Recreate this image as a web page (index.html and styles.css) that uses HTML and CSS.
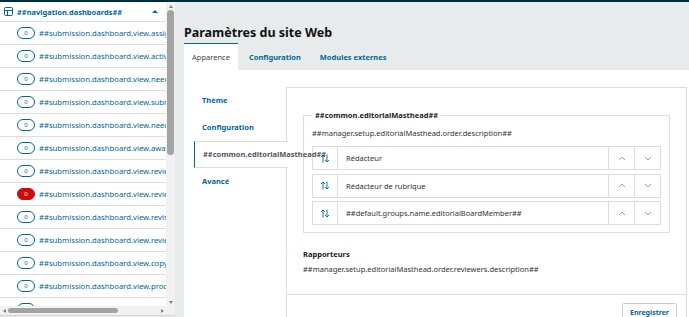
FILE: index.html
```html
<!DOCTYPE html>
<html lang="fr">
<head>
    <meta charset="UTF-8">
    <meta name="viewport" content="width=device-width, initial-scale=1.0">
    <title>Paramètres du site Web</title>
    <link rel="stylesheet" href="styles.css">
</head>
<body>

<div class="topbar"></div>

<div class="app">
    <nav class="sidebar">
        <div class="side-main">
            <div class="side-view">
                <div class="side-head">
                    <svg class="head-icon" viewBox="0 0 9 9" width="9" height="9">
                        <rect x="0.5" y="0.5" width="8" height="8" rx="1" fill="none" stroke="#006798"/>
                        <path d="M0.5 3.5H8.5M3.5 3.5V8.5" stroke="#006798"/>
                    </svg>
                    <span class="head-title">##navigation.dashboards##</span>
                    <span class="head-caret"></span>
                </div>
                <ul class="side-list">
                    <li><span class="badge">0</span>##submission.dashboard.view.assignedToMe##</li>
                    <li><span class="badge">0</span>##submission.dashboard.view.active##</li>
                    <li><span class="badge">0</span>##submission.dashboard.view.needsEditor##</li>
                    <li><span class="badge">0</span>##submission.dashboard.view.submission##</li>
                    <li><span class="badge">0</span>##submission.dashboard.view.needsReviewers##</li>
                    <li><span class="badge">0</span>##submission.dashboard.view.awaitingReviewers##</li>
                    <li><span class="badge">0</span>##submission.dashboard.view.reviewsComplete##</li>
                    <li><span class="badge badge-alert">0</span>##submission.dashboard.view.reviewsOverdue##</li>
                    <li><span class="badge">0</span>##submission.dashboard.view.revisionsRequested##</li>
                    <li><span class="badge">0</span>##submission.dashboard.view.reviewsSubmitted##</li>
                    <li><span class="badge">0</span>##submission.dashboard.view.copyediting##</li>
                    <li><span class="badge">0</span>##submission.dashboard.view.production##</li>
                    <li><span class="badge">0</span>##submission.dashboard.view.scheduledForPublication##</li>
                </ul>
            </div>
            <div class="vscroll">
                <span class="arrow arrow-up"></span>
                <div class="vtrack"><div class="vthumb"></div></div>
                <span class="arrow arrow-down"></span>
            </div>
        </div>
        <div class="hscroll">
            <span class="arrow arrow-left"></span>
            <div class="htrack"><div class="hthumb"></div></div>
            <span class="arrow arrow-right"></span>
            <span class="corner"></span>
        </div>
    </nav>

    <main class="main">
        <h1 class="page-title">Paramètres du site Web</h1>

        <div class="tabs">
            <div class="tab tab-active">Apparence</div>
            <div class="tab">Configuration</div>
            <div class="tab">Modules externes</div>
        </div>

        <div class="panel">
            <div class="vtabs">
                <div class="vtab">Thème</div>
                <div class="vtab">Configuration</div>
                <div class="vtab vtab-active">##common.editorialMasthead##</div>
                <div class="vtab">Avancé</div>
            </div>

            <div class="vcontent">
                <div class="form-body">
                    <fieldset class="group">
                        <legend>##common.editorialMasthead##</legend>
                        <p class="desc">##manager.setup.editorialMasthead.order.description##</p>
                        <div class="order-list">
                            <div class="order-row">
                                <div class="cell cell-drag">
                                    <svg viewBox="0 0 10 9" width="10" height="9"><path d="M3 8.5V1M1 3L3 1L5 3M7 0.5V8M5 6L7 8L9 6" fill="none" stroke="#006798" stroke-width="0.9"/></svg>
                                </div>
                                <div class="cell cell-label">Rédacteur</div>
                                <div class="cell cell-btn"><svg viewBox="0 0 8 5" width="8" height="5"><path d="M1 4L4 1L7 4" fill="none" stroke="#999" stroke-width="0.9"/></svg></div>
                                <div class="cell cell-btn"><svg viewBox="0 0 8 5" width="8" height="5"><path d="M1 1L4 4L7 1" fill="none" stroke="#999" stroke-width="0.9"/></svg></div>
                            </div>
                            <div class="order-row">
                                <div class="cell cell-drag">
                                    <svg viewBox="0 0 10 9" width="10" height="9"><path d="M3 8.5V1M1 3L3 1L5 3M7 0.5V8M5 6L7 8L9 6" fill="none" stroke="#006798" stroke-width="0.9"/></svg>
                                </div>
                                <div class="cell cell-label">Rédacteur de rubrique</div>
                                <div class="cell cell-btn"><svg viewBox="0 0 8 5" width="8" height="5"><path d="M1 4L4 1L7 4" fill="none" stroke="#999" stroke-width="0.9"/></svg></div>
                                <div class="cell cell-btn"><svg viewBox="0 0 8 5" width="8" height="5"><path d="M1 1L4 4L7 1" fill="none" stroke="#999" stroke-width="0.9"/></svg></div>
                            </div>
                            <div class="order-row">
                                <div class="cell cell-drag">
                                    <svg viewBox="0 0 10 9" width="10" height="9"><path d="M3 8.5V1M1 3L3 1L5 3M7 0.5V8M5 6L7 8L9 6" fill="none" stroke="#006798" stroke-width="0.9"/></svg>
                                </div>
                                <div class="cell cell-label">##default.groups.name.editorialBoardMember##</div>
                                <div class="cell cell-btn"><svg viewBox="0 0 8 5" width="8" height="5"><path d="M1 4L4 1L7 4" fill="none" stroke="#999" stroke-width="0.9"/></svg></div>
                                <div class="cell cell-btn"><svg viewBox="0 0 8 5" width="8" height="5"><path d="M1 1L4 4L7 1" fill="none" stroke="#999" stroke-width="0.9"/></svg></div>
                            </div>
                        </div>
                    </fieldset>

                    <div class="section">
                        <div class="section-title">Rapporteurs</div>
                        <p class="desc">##manager.setup.editorialMasthead.order.reviewers.description##</p>
                    </div>
                </div>

                <div class="form-footer">
                    <button class="btn-save">Enregistrer</button>
                </div>
            </div>
        </div>
    </main>
</div>

</body>
</html>
```

FILE: styles.css
```css
body {
    margin: 0;
    padding: 0;
    overflow: hidden;
    font-family: "Noto Sans", Arial, sans-serif;
    font-size: 7.5px;
    color: #222222;
    background: #e8ebec;
    height: 317px;
}
.topbar {
    height: 2px;
    background: #002c40;
}
.app {
    display: flex;
    height: 315px;
}

/* left navigation */
.sidebar {
    width: 175px;
    height: 313px;
    flex-shrink: 0;
    display: flex;
    flex-direction: column;
    background: #ffffff;
    border-bottom: 1px solid #d4d4d4;
}
.side-main {
    display: flex;
    height: 304px;
}
.side-view {
    width: 166px;
    overflow: hidden;
}
.side-head {
    display: flex;
    align-items: center;
    height: 19px;
    padding-left: 4px;
    border-bottom: 1px solid #dddddd;
    color: #006798;
    font-weight: bold;
}
.head-icon {
    margin-right: 4px;
}
.head-title {
    flex: 1;
}
.head-caret {
    width: 0;
    height: 0;
    border-left: 3px solid transparent;
    border-right: 3px solid transparent;
    border-bottom: 3px solid #006798;
    margin-right: 8px;
}
.side-list {
    list-style: none;
    margin: 0;
    padding: 0;
}
.side-list li {
    display: flex;
    align-items: center;
    height: 22px;
    border-bottom: 1px solid #dddddd;
    padding-left: 17px;
    color: #006798;
    white-space: nowrap;
    font-size: 7.7px;
}
.badge {
    display: inline-flex;
    justify-content: center;
    align-items: center;
    width: 16px;
    height: 10px;
    border: 1px solid #006798;
    border-radius: 6px;
    font-size: 6px;
    margin-right: 4px;
    flex-shrink: 0;
}
.badge-alert {
    background: #d00a0a;
    border-color: #d00a0a;
    color: #ffffff;
}

/* fake scrollbars of the navigation */
.vscroll {
    width: 9px;
    display: flex;
    flex-direction: column;
    background: #f1f1f1;
}
.vtrack {
    flex: 1;
    padding: 0 1px;
}
.vthumb {
    height: 145px;
    background: #a3a3a3;
    border-radius: 4px;
}
.hscroll {
    display: flex;
    height: 9px;
    background: #f1f1f1;
}
.htrack {
    flex: 1;
    padding: 2px 0;
    box-sizing: border-box;
}
.hthumb {
    width: 110px;
    height: 5px;
    background: #a3a3a3;
    border-radius: 3px;
}
.arrow {
    display: flex;
    justify-content: center;
    align-items: center;
    width: 9px;
    height: 8px;
    flex-shrink: 0;
}
.arrow::before {
    content: "";
    width: 0;
    height: 0;
}
.arrow-up::before {
    border-left: 2.5px solid transparent;
    border-right: 2.5px solid transparent;
    border-bottom: 3px solid #808080;
}
.arrow-down::before {
    border-left: 2.5px solid transparent;
    border-right: 2.5px solid transparent;
    border-top: 3px solid #808080;
}
.arrow-left,
.arrow-right {
    width: 8px;
    height: 9px;
}
.arrow-left::before {
    border-top: 2.5px solid transparent;
    border-bottom: 2.5px solid transparent;
    border-right: 3px solid #808080;
}
.arrow-right::before {
    border-top: 2.5px solid transparent;
    border-bottom: 2.5px solid transparent;
    border-left: 3px solid #808080;
}
.corner {
    width: 9px;
    flex-shrink: 0;
    background: #f1f1f1;
}

/* main area */
.main {
    flex: 1;
    padding-left: 9px;
    min-width: 0;
}
.page-title {
    margin: 0;
    padding-top: 21px;
    height: 20px;
    font-size: 12.5px;
    font-weight: bold;
    line-height: 20px;
    color: #111111;
}
.tabs {
    display: flex;
    gap: 3px;
}
.tab {
    height: 26px;
    line-height: 26px;
    padding: 0 8px;
    color: #006798;
    font-weight: bold;
    border-top: 1px solid transparent;
}
.tab-active {
    background: #ffffff;
    border-top-color: #006798;
    color: #444444;
    font-weight: normal;
}
.panel {
    display: flex;
    align-items: flex-start;
    background: #ffffff;
    height: 250px;
    padding: 17px 2px 0 10px;
    box-sizing: border-box;
}
.vtabs {
    width: 92px;
    flex-shrink: 0;
    position: relative;
    z-index: 1;
}
.vtab {
    height: 27px;
    line-height: 27px;
    padding-left: 8px;
    color: #006798;
    font-weight: bold;
    white-space: nowrap;
}
.vtab-active {
    height: 25px;
    line-height: 25px;
    margin-right: -2px;
    padding-left: 8px;
    background: #ffffff;
    border-top: 1px solid #dddddd;
    border-bottom: 1px solid #dddddd;
    border-left: 1px solid #006798;
    color: #555555;
}
.vcontent {
    flex: 1;
    border: 1px solid #dddddd;
    height: 260px;
}
.form-body {
    padding: 22px 16px 0 16px;
    height: 184px;
}
.group {
    margin: 0;
    padding: 7px 8px 7px 8px;
    border: 1px solid #dddddd;
}
.group legend {
    padding: 0 3px;
    font-weight: bold;
    color: #222222;
}
.desc {
    margin: 0;
    line-height: 12px;
    color: #333333;
}
.order-list {
    display: flex;
    flex-direction: column;
    gap: 3.5px;
    margin-top: 7px;
}
.order-row {
    display: flex;
    height: 22px;
    border: 1px solid #dddddd;
}
.cell {
    display: flex;
    align-items: center;
}
.cell-drag {
    width: 24px;
    justify-content: center;
    border-right: 1px solid #dddddd;
}
.cell-label {
    flex: 1;
    padding-left: 8px;
    color: #333333;
}
.cell-btn {
    width: 25px;
    justify-content: center;
    border-left: 1px solid #dddddd;
}
.section {
    margin-top: 15px;
}
.section-title {
    font-weight: bold;
    line-height: 12px;
    margin-bottom: 3px;
}
.form-footer {
    border-top: 1px solid #dddddd;
    display: flex;
    justify-content: flex-end;
    padding: 8px 9px 0 0;
}
.btn-save {
    font-family: "Noto Sans", Arial, sans-serif;
    font-size: 7px;
    font-weight: bold;
    color: #006798;
    background: #ffffff;
    border: 1px solid #cccccc;
    border-radius: 2px;
    height: 19px;
    padding: 0 7px;
    box-shadow: 0 1px 0 #dddddd;
}
```
